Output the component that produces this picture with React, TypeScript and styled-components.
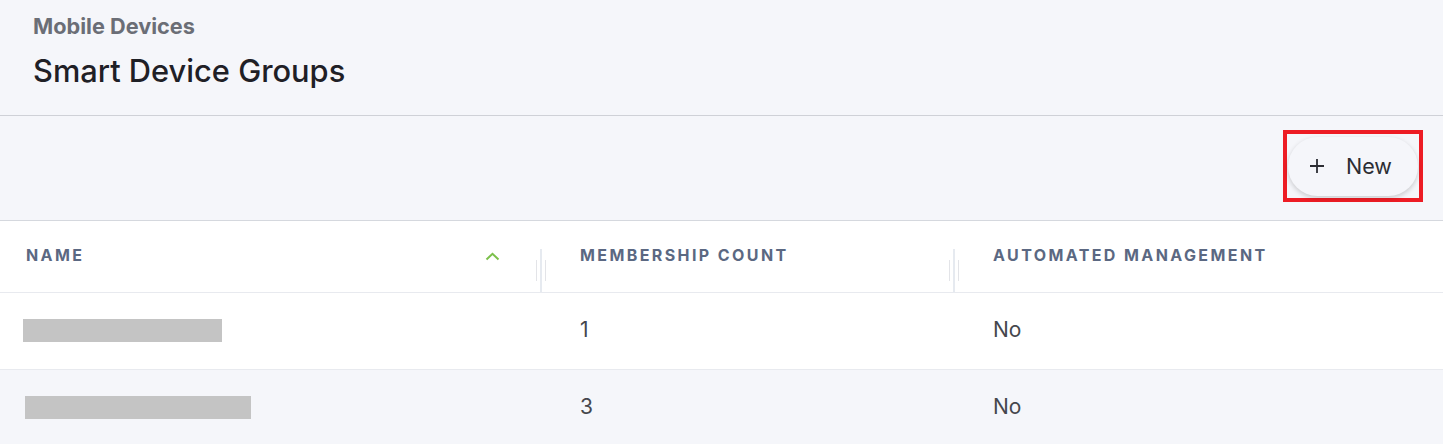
import React from "react";
import styled, { createGlobalStyle } from "styled-components";

const Global = createGlobalStyle`
  html, body { margin: 0; padding: 0; background: #f5f6fa; }
  body { font-family: "Inter", "Liberation Sans", sans-serif; }
  * { box-sizing: border-box; }
`;

const Page = styled.div`
  width: 1443px;
  min-height: 444px;
  background: #f5f6fa;
  display: flex;
  flex-direction: column;
`;

const Header = styled.header`
  height: 116px;
  padding: 13px 0 0 33px;
  border-bottom: 1px solid #cfd1d7;
  display: flex;
  flex-direction: column;
`;

const Breadcrumb = styled.div`
  font-size: 21.7px;
  font-weight: 700;
  color: #6b6e76;
  line-height: 26px;
`;

const Title = styled.h1`
  margin: 14px 0 0 0;
  font-size: 30.8px;
  font-weight: 500;
  color: #1f2026;
  line-height: 36px;
`;

const Toolbar = styled.div`
  height: 105px;
  border-bottom: 1px solid #d5d8de;
  display: flex;
  justify-content: flex-end;
  align-items: flex-start;
  padding: 14px 20px 0 0;
`;

const Highlight = styled.div`
  border: 4px solid #ed1c24;
  padding: 3px 1px 2px 1px;
  display: flex;
`;

const NewButton = styled.button`
  width: 130px;
  height: 59px;
  border: none;
  border-radius: 30px;
  background: #f5f6fa;
  box-shadow: 0 2px 5px rgba(0, 0, 0, 0.18);
  display: flex;
  align-items: center;
  justify-content: flex-start;
  gap: 21px;
  font-family: inherit;
  font-size: 21.5px;
  color: #2c2d33;
  cursor: pointer;
  padding: 0 0 2px 21px;
`;

const Table = styled.div`
  background: #ffffff;
  display: flex;
  flex-direction: column;
`;

const Row = styled.div<{ $head?: boolean; $alt?: boolean }>`
  display: grid;
  grid-template-columns: 540px 413px 1fr;
  height: ${(p) => (p.$head ? "72px" : "77px")};
  background: ${(p) => (p.$alt ? "#f5f6fa" : "#ffffff")};
  border-bottom: 1px solid #e8eaef;
`;

const HeadCell = styled.div<{ $first?: boolean }>`
  position: relative;
  display: flex;
  align-items: center;
  padding: 0 0 3px ${(p) => (p.$first ? "26px" : "40px")};
  font-size: 16px;
  font-weight: 700;
  letter-spacing: 2.4px;
  color: #5b6882;
  text-transform: uppercase;
`;

const Sort = styled.span`
  position: absolute;
  left: 485px;
  top: 31px;
  display: flex;
`;

const Resizer = styled.div`
  position: absolute;
  right: -2px;
  top: 28px;
  bottom: 0;
  width: 2px;
  background: #e6eaf0;
  &::before, &::after {
    content: "";
    position: absolute;
    top: 11px;
    height: 21px;
    width: 1px;
    background: #e3e4e8;
  }
  &::before { left: -4px; }
  &::after { left: 5px; }
`;

const Cell = styled.div<{ $first?: boolean }>`
  display: flex;
  align-items: center;
  padding-left: ${(p) => (p.$first ? "23px" : "40px")};
  font-size: 21px;
  color: #45474d;
  padding-bottom: 4px;
`;

const Redacted = styled.div<{ $w: number; $shift: number }>`
  height: 23px;
  width: ${(p) => p.$w}px;
  margin-left: ${(p) => p.$shift}px;
  margin-top: 2px;
  background: #c4c4c4;
`;

const rows = [
  { w: 199, shift: 0, count: "1", auto: "No" },
  { w: 226, shift: 2, count: "3", auto: "No" },
];

export default function App() {
  return (
    <Page>
      <Global />
      <Header>
        <Breadcrumb>Mobile Devices</Breadcrumb>
        <Title>Smart Device Groups</Title>
      </Header>
      <Toolbar>
        <Highlight>
          <NewButton>
            <svg width="16" height="16" viewBox="0 0 16 16">
              <path d="M8 1v14M1 8h14" stroke="#2c2d33" strokeWidth="1.8" />
            </svg>
            <span>New</span>
          </NewButton>
        </Highlight>
      </Toolbar>
      <Table>
        <Row $head>
          <HeadCell $first>
            Name
            <Sort>
              <svg width="15" height="9" viewBox="0 0 15 9">
                <path d="M1.5 7.5L7.5 1.8L13.5 7.5" fill="none" stroke="#7cc04b" strokeWidth="2" />
              </svg>
            </Sort>
            <Resizer />
          </HeadCell>
          <HeadCell>
            Membership Count
            <Resizer />
          </HeadCell>
          <HeadCell>Automated Management</HeadCell>
        </Row>
        {rows.map((r, i) => (
          <Row key={i} $alt={i % 2 === 1}>
            <Cell $first>
              <Redacted $w={r.w} $shift={r.shift} />
            </Cell>
            <Cell>{r.count}</Cell>
            <Cell>{r.auto}</Cell>
          </Row>
        ))}
      </Table>
    </Page>
  );
}
